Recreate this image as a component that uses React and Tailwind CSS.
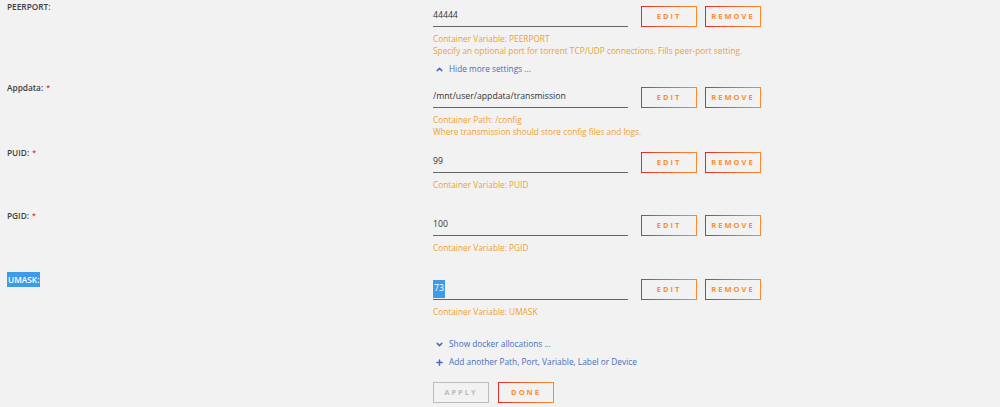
import { ChevronUp, ChevronDown, Plus } from 'lucide-react'

const rows = [
  {
    label: 'PEERPORT:',
    value: '44444',
    help: ['Container Variable: PEERPORT', 'Specify an optional port for torrent TCP/UDP connections. Fills peer-port setting.'],
    h: 'h-[81px]',
    more: true,
  },
  {
    label: 'Appdata:',
    required: true,
    value: '/mnt/user/appdata/transmission',
    help: ['Container Path: /config', 'Where transmission should store config files and logs.'],
    h: 'h-[65px]',
  },
  { label: 'PUID:', required: true, value: '99', help: ['Container Variable: PUID'], h: 'h-[63px]' },
  { label: 'PGID:', required: true, value: '100', help: ['Container Variable: PGID'], h: 'h-[64px]' },
  { label: 'UMASK:', value: '73', help: ['Container Variable: UMASK'], selected: true },
]

function GradientButton({ children }) {
  return (
    <div className="h-[21px] w-[56px] p-px bg-gradient-to-r from-[#e22828] to-[#ff8c2f]">
      <button className="w-full h-full bg-[#f2f2f2] text-[7.5px] font-bold tracking-[2px] text-[#ff8c2f] flex items-center justify-center">
        {children}
      </button>
    </div>
  )
}

function LinkLine({ icon, children }) {
  return (
    <div className="flex items-center gap-[5px] text-[8.3px] leading-[12px] text-[#486dba] pl-[2px]">
      {icon}
      <span>{children}</span>
    </div>
  )
}

function SettingRow({ row }) {
  return (
    <div className={`flex ${row.h || ''}`}>
      <div className="w-[426px] text-[8.3px] leading-[9px] text-[#3f3f3f] font-semibold">
        <span className={row.selected ? 'bg-[#3d9be9] text-white py-[2px] px-px' : ''}>{row.label}</span>
        {row.required && <span className="text-[#e22828] text-[7px] align-top ml-[3px]">*</span>}
      </div>
      <div className="pt-[4px]">
        <div className="flex items-center">
          <div className="w-[195px] h-[21px] border-b border-[#666666] flex items-center text-[8.7px] text-[#333]">
            <span className={row.selected ? 'bg-[#3d9be9] text-white py-[2px] px-px' : ''}>{row.value}</span>
          </div>
          <div className="flex gap-[8px] ml-[13px]">
            <GradientButton>EDIT</GradientButton>
            <GradientButton>REMOVE</GradientButton>
          </div>
        </div>
        <div className="mt-[6px] text-[8.3px] leading-[12px] text-[#f0a030]">
          {row.help.map((line) => (
            <div key={line}>{line}</div>
          ))}
        </div>
        {row.more && (
          <div className="mt-[6px]">
            <LinkLine icon={<ChevronUp size={9} strokeWidth={4} />}>Hide more settings ...</LinkLine>
          </div>
        )}
      </div>
    </div>
  )
}

export default function App() {
  return (
    <div className="w-full h-[407px] overflow-hidden bg-[#f2f2f2] pt-[2px] px-[7px] font-['Open_Sans',sans-serif]">
      {rows.map((row) => (
        <SettingRow key={row.label} row={row} />
      ))}
      <div className="pl-[426px]">
        <div className="mt-[20px]">
          <LinkLine icon={<ChevronDown size={9} strokeWidth={4} />}>Show docker allocations ...</LinkLine>
        </div>
        <div className="mt-[6px]">
          <LinkLine icon={<Plus size={9} strokeWidth={4} />}>Add another Path, Port, Variable, Label or Device</LinkLine>
        </div>
        <div className="flex gap-[9px] mt-[14px]">
          <button className="h-[21px] w-[56px] border border-[#bbbbbb] text-[7.5px] font-bold tracking-[2px] text-[#bbbbbb]">
            APPLY
          </button>
          <GradientButton>DONE</GradientButton>
        </div>
      </div>
    </div>
  )
}
